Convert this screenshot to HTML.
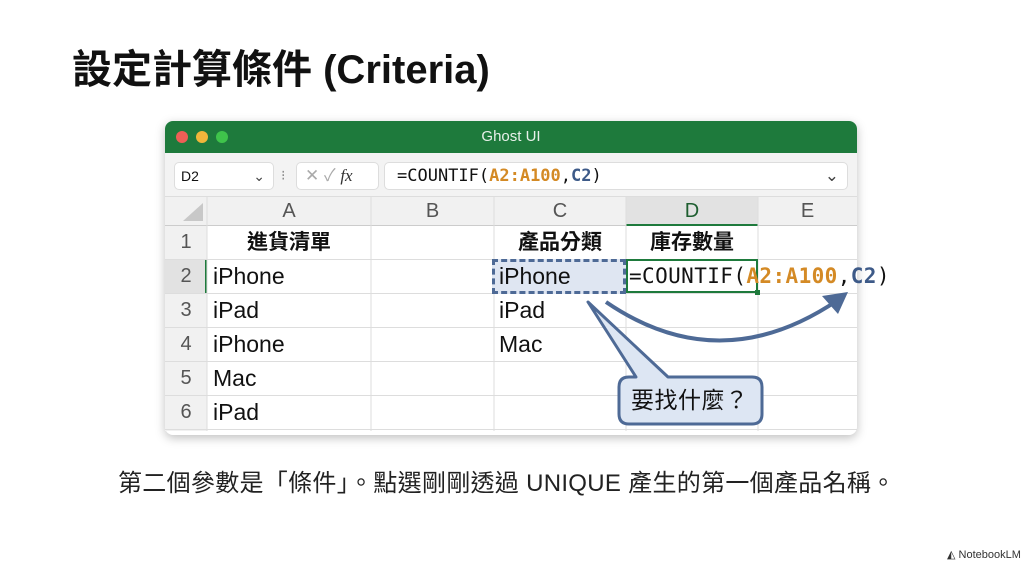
<!DOCTYPE html>
<html><head><meta charset="utf-8"><style>
*{margin:0;padding:0;box-sizing:border-box}
body{width:1024px;height:565px;background:#fff;position:relative;overflow:hidden;font-family:"Liberation Sans","Noto Sans CJK TC",sans-serif;color:#111}
.a{position:absolute}
.cell{position:absolute;font-size:23px;line-height:34px}
.hdr{position:absolute;top:197px;height:29px;line-height:29px;font-size:20px;color:#555;text-align:center}
.rn{position:absolute;left:165px;width:42px;text-align:center;font-size:20px;color:#555}
</style></head><body>
<div class="a" style="left:72px;top:44px;font-size:40px;font-weight:bold;line-height:52px">設定計算條件 (Criteria)</div>

<div class="a" style="left:165px;top:121px;width:692px;height:314px;background:#fff;border-radius:8px;box-shadow:0 3px 10px rgba(0,0,0,.25);overflow:hidden">
 <div class="a" style="left:0;top:0;width:692px;height:32px;background:#1e7a3c"></div>
 <div class="a" style="left:11px;top:10px;width:12px;height:12px;border-radius:6px;background:#ee5f56"></div>
 <div class="a" style="left:31px;top:10px;width:12px;height:12px;border-radius:6px;background:#f0b63b"></div>
 <div class="a" style="left:51px;top:10px;width:12px;height:12px;border-radius:6px;background:#3fc44b"></div>
 <div class="a" style="left:0;top:7px;width:692px;text-align:center;color:#e8f0ea;font-size:15px">Ghost UI</div>
 <div class="a" style="left:0;top:32px;width:692px;height:44px;background:#f3f3f3;border-bottom:1px solid #ddd"></div>
 <div class="a" style="left:9px;top:41px;width:100px;height:28px;background:#fff;border:1px solid #ddd;border-radius:5px;font-size:14px;line-height:26px;padding-left:6px">D2<span style="position:absolute;right:8px;color:#444">⌄</span></div>
 <div class="a" style="left:116px;top:46px;color:#888;font-size:14px">⁝</div>
 <div class="a" style="left:131px;top:41px;width:83px;height:28px;background:#fff;border:1px solid #ddd;border-radius:5px;font-size:17px;line-height:26px;color:#aaa;padding-left:8px">✕ ✓ <i style="font-family:'Liberation Serif',serif;color:#333">fx</i></div>
 <div class="a" style="left:219px;top:41px;width:464px;height:28px;background:#fff;border:1px solid #ddd;border-radius:5px;font-size:17px;line-height:26px;padding-left:12px;font-family:'DejaVu Sans Mono',monospace;letter-spacing:0px">=COUNTIF(<b style="color:#d48a25">A2:A100</b>,<b style="color:#3d5a88">C2</b>)<span style="position:absolute;right:8px;color:#444;font-family:'Liberation Sans'">⌄</span></div>
</div>

<div class="a" style="left:165px;top:197px;width:692px;height:29px;background:#f1f1f1;border-bottom:1px solid #ccc"></div>
<div class="a" style="left:626px;top:197px;width:132px;height:29px;background:#e2e2e2;border-bottom:2px solid #1e7a3c"></div>
<div class="a" style="left:165px;top:226px;width:42px;height:205px;background:#f1f1f1"></div>
<div class="a" style="left:165px;top:259px;width:42px;height:34px;background:#e2e2e2;border-right:2px solid #1e7a3c"></div>
<svg class="a" style="left:165px;top:197px" width="692" height="234">
 <polygon points="18,24 38,24 38,6" fill="#c8c8c8"/>
 <g stroke="#ddd" stroke-width="1">
  <line x1="42" y1="0" x2="42" y2="234"/><line x1="206" y1="0" x2="206" y2="234"/>
  <line x1="329" y1="0" x2="329" y2="234"/><line x1="461" y1="0" x2="461" y2="234"/>
  <line x1="593" y1="0" x2="593" y2="234"/>
  <line x1="0" y1="62.5" x2="692" y2="62.5"/><line x1="0" y1="96.5" x2="692" y2="96.5"/>
  <line x1="0" y1="130.5" x2="692" y2="130.5"/><line x1="0" y1="164.5" x2="692" y2="164.5"/>
  <line x1="0" y1="198.5" x2="692" y2="198.5"/><line x1="0" y1="232.5" x2="692" y2="232.5"/>
 </g>
</svg>
<div class="hdr" style="left:207px;width:164px">A</div>
<div class="hdr" style="left:371px;width:123px">B</div>
<div class="hdr" style="left:494px;width:132px">C</div>
<div class="hdr" style="left:626px;width:132px;color:#1e5e30">D</div>
<div class="hdr" style="left:758px;width:99px">E</div>
<div class="rn" style="top:226px;line-height:33px">1</div>
<div class="rn" style="top:259px;line-height:34px">2</div>
<div class="rn" style="top:293px;line-height:34px">3</div>
<div class="rn" style="top:327px;line-height:34px">4</div>
<div class="rn" style="top:361px;line-height:34px">5</div>
<div class="rn" style="top:395px;line-height:34px">6</div>

<div class="cell" style="left:207px;width:164px;top:226px;text-align:center;font-weight:bold;line-height:33px;font-size:21px">進貨清單</div>
<div class="cell" style="left:494px;width:132px;top:226px;text-align:center;font-weight:bold;line-height:33px;font-size:21px">產品分類</div>
<div class="cell" style="left:626px;width:132px;top:226px;text-align:center;font-weight:bold;line-height:33px;font-size:21px">庫存數量</div>
<div class="cell" style="left:213px;top:259px">iPhone</div>
<div class="cell" style="left:213px;top:293px">iPad</div>
<div class="cell" style="left:213px;top:327px">iPhone</div>
<div class="cell" style="left:213px;top:361px">Mac</div>
<div class="cell" style="left:213px;top:395px">iPad</div>

<div class="a" style="left:492px;top:259px;width:134px;height:35px;background:#dfe6f2;border:3px dashed #4e6a96"></div>
<div class="cell" style="left:499px;top:259px">iPhone</div>
<div class="cell" style="left:499px;top:293px">iPad</div>
<div class="cell" style="left:499px;top:327px">Mac</div>
<div class="a" style="left:626px;top:259px;width:132px;height:34px;border:2px solid #1e7a3c;background:#fff"></div>
<div class="a" style="left:755px;top:290px;width:5px;height:5px;background:#1e7a3c"></div>
<div class="cell" style="left:629px;top:260px;font-family:'DejaVu Sans Mono',monospace;font-size:21px;letter-spacing:0.4px;line-height:32px">=COUNTIF(<b style="color:#d48a25">A2:A100</b>,<b style="color:#3d5a88">C2</b>)</div>

<svg class="a" style="left:0;top:0" width="1024" height="565">
 <path d="M606 302 Q720 380 838 300" fill="none" stroke="#4e6a96" stroke-width="4"/>
 <polygon points="848,292 822,296 838,314" fill="#4e6a96"/>
 <path d="M588 302 L668 377 L752 377 Q762 377 762 387 L762 414 Q762 424 752 424 L629 424 Q619 424 619 414 L619 387 Q619 377 629 377 L636 377 Z" fill="#dde6f3" stroke="#4e6a96" stroke-width="3" stroke-linejoin="round"/>
</svg>
<div class="a" style="left:631px;top:384px;font-size:23px;line-height:32px;letter-spacing:0.5px">要找什麼？</div>

<div class="a" style="left:118px;top:467px;font-size:24px;line-height:34px;color:#222;letter-spacing:0.3px">第二個參數是「條件」。點選剛剛透過 UNIQUE 產生的第一個產品名稱。</div>
<div class="a" style="left:947px;top:548px;font-size:11px;color:#333">◭ NotebookLM</div>
</body></html>
